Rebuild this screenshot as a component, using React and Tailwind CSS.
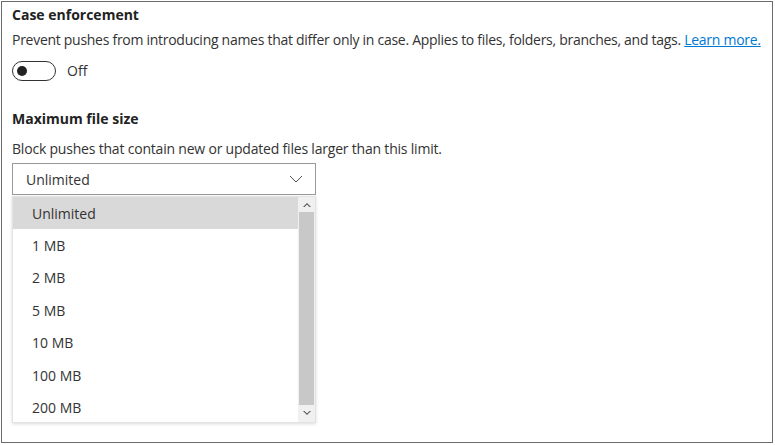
import React from "react";

const sizes = ["Unlimited", "1 MB", "2 MB", "5 MB", "10 MB", "100 MB", "200 MB"];

function Toggle() {
  return (
    <div className="flex items-center gap-[11px]">
      <div className="w-[44px] h-[20px] rounded-full border border-[#333] flex items-center px-[4px]">
        <div className="w-[10px] h-[10px] rounded-full bg-[#222]" />
      </div>
      <span className="text-[14px] text-[#333]">Off</span>
    </div>
  );
}

function SizeSelect() {
  return (
    <div className="w-[304px]">
      <div className="h-[32px] border border-[#999] flex items-center justify-between pl-[13px] pr-[12px] text-[14px] text-[#333]">
        <span>Unlimited</span>
        <svg width="14" height="8" viewBox="0 0 14 8" fill="none" stroke="#555" strokeWidth="1">
          <path d="M1 1l6 6 6-6" />
        </svg>
      </div>
      <div className="mt-[1px] h-[227px] border border-[#e3e3e3] bg-white shadow-[0_1px_3px_rgba(0,0,0,0.15)] flex">
        <ul className="flex-1">
          {sizes.map((s, i) => (
            <li
              key={s}
              className={
                "h-[32.4px] flex items-center pl-[19px] text-[14px] text-[#333] " +
                (i === 0 ? "bg-[#d9d9d9]" : "")
              }
            >
              {s}
            </li>
          ))}
        </ul>
        <div className="w-[17px] bg-[#f0f0f0] flex flex-col">
          <div className="h-[15px] flex items-center justify-center">
            <svg width="8" height="5" viewBox="0 0 8 5" fill="#555">
              <path d="M0 5l4-4 4 4H6.5L4 2.5 1.5 5z" />
            </svg>
          </div>
          <div className="flex-1 mx-[1px] bg-[#c8c8c8]" />
          <div className="h-[17px] flex items-center justify-center">
            <svg width="8" height="5" viewBox="0 0 8 5" fill="#555">
              <path d="M0 0l4 4 4-4H6.5L4 2.5 1.5 0z" />
            </svg>
          </div>
        </div>
      </div>
    </div>
  );
}

export default function App() {
  return (
    <div className="w-[775px] h-[445px] bg-white p-[1px] font-['Open_Sans',sans-serif]">
      <div className="w-[772px] h-[442px] border border-[#6b6b6b] pl-[10px] pt-[3px] text-[#222]">
        <h2 className="text-[14px] font-bold leading-[20px]">Case enforcement</h2>
        <p className="mt-[5px] text-[14px] leading-[20px] text-[#333] tracking-[-0.28px]">
          Prevent pushes from introducing names that differ only in case. Applies to files, folders, branches, and tags.{" "}
          <a href="#" className="text-[#0078d4] underline">Learn more.</a>
        </p>
        <div className="mt-[10px]">
          <Toggle />
        </div>
        <h2 className="mt-[28px] text-[14px] font-bold leading-[20px]">Maximum file size</h2>
        <p className="mt-[10px] text-[14px] leading-[20px] text-[#333] tracking-[-0.2px]">
          Block pushes that contain new or updated files larger than this limit.
        </p>
        <div className="mt-[4px]">
          <SizeSelect />
        </div>
      </div>
    </div>
  );
}
